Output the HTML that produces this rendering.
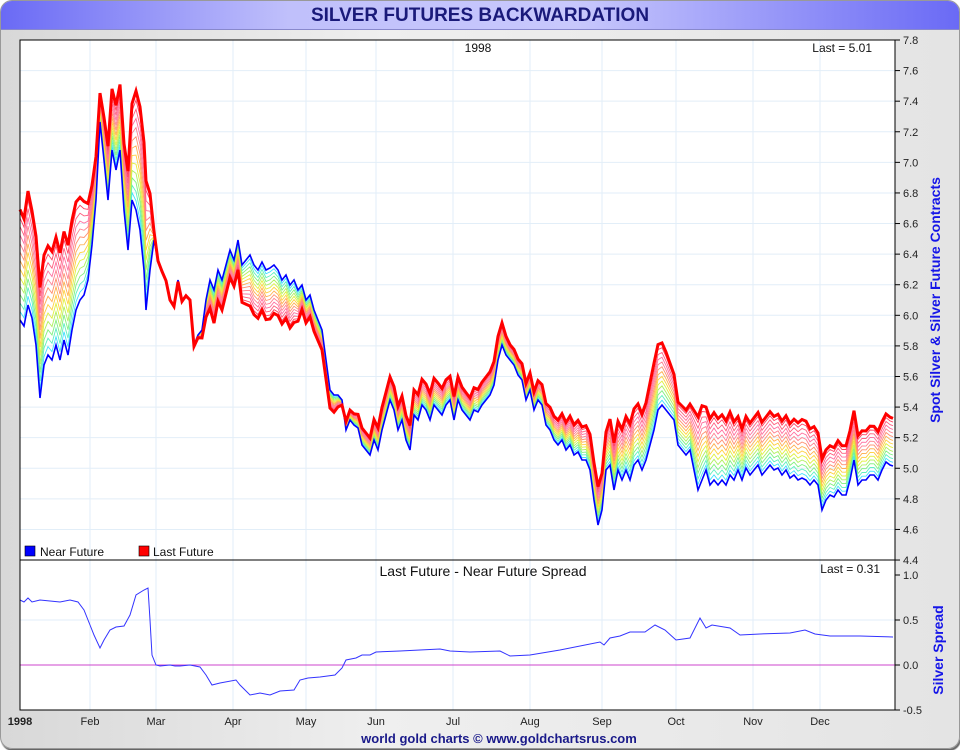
<!DOCTYPE html>
<html><head><meta charset="utf-8"><style>
html,body{margin:0;padding:0;background:#fff;}
body{width:960px;height:750px;overflow:hidden;font-family:"Liberation Sans",sans-serif;}
#frame{position:absolute;left:0;top:0;width:958px;height:747px;border-radius:12px;background:linear-gradient(90deg,#d8d8d8,#efefef 40%,#e4e4e4);border:1px solid #999;box-shadow:1px 2px 1px #666;overflow:hidden;}
#title{position:absolute;left:0;top:0;width:958px;height:28px;background:linear-gradient(90deg,#6a6af5,#c0c0fb 30%,#c8c8fc 60%,#6a6af5);border-bottom:1px solid #8888cc;text-align:center;font-weight:bold;font-size:19px;line-height:30px;color:#1a1a7a;}
svg{position:absolute;left:0;top:0;}
</style></head><body>
<div id="frame"><div id="title">SILVER FUTURES BACKWARDATION</div></div>
<svg id="s" width="960" height="750" font-family="Liberation Sans, sans-serif"></svg>
<script>
const S=document.getElementById('s');let h='';
const L=20,R=895,T=40,MB=560,SB=710;
h+=`<rect x="${L}" y="${T}" width="${R-L}" height="${SB-T}" fill="#fff"/>`;
const mx=[20,90,156,233,306,376,453,530,602,676,753,820];
const mn=['1998','Feb','Mar','Apr','May','Jun','Jul','Aug','Sep','Oct','Nov','Dec'];
mx.forEach((x,i)=>{h+=`<line x1="${x}" y1="${T}" x2="${x}" y2="${SB}" stroke="#e2eef8"/>`;h+=`<text x="${x}" y="725" font-size="11" text-anchor="middle" fill="#222" ${i==0?'font-weight="bold"':''}>${mn[i]}</text>`;});
for(let i=0;i<=17;i++){let v=7.8-i*0.2,y=T+i*30.59;if(i>0&&i<17)h+=`<line x1="${L}" y1="${y}" x2="${R}" y2="${y}" stroke="#e2eef8"/>`;h+=`<line x1="${R}" y1="${y}" x2="${R+5}" y2="${y}" stroke="#000"/><text x="${R+8}" y="${y+4}" font-size="11" fill="#222">${v.toFixed(1)}</text>`;}
[[1,575],[0.5,620],[0,665],[-0.5,710]].forEach(([v,y])=>{if(y<710&&y>575)h+=`<line x1="${L}" y1="${y}" x2="${R}" y2="${y}" stroke="#e2eef8"/>`;h+=`<line x1="${R}" y1="${y}" x2="${R+5}" y2="${y}" stroke="#000"/><text x="${R+8}" y="${y+4}" font-size="11" fill="#222">${v.toFixed(1)}</text>`;});
const B=[20,320,24,326,28,305,32,318,36,345,40,398,44,365,48,355,52,360,56,345,60,360,64,340,68,355,72,330,76,310,80,300,84,295,88,280,92,245,96,200,100,122,104,160,108,200,112,150,116,170,120,150,124,210,128,250,132,200,136,210,140,230,144,270,146,310,150,270,154,240,158,260,162,270,166,280,170,300,174,305,178,280,182,300,186,295,190,300,194,345,198,335,202,330,206,300,210,280,214,290,218,270,222,280,226,265,230,250,234,260,238,240,242,265,246,260,250,255,254,265,258,270,262,262,266,270,270,268,274,265,278,270,282,280,286,275,290,285,294,280,298,290,302,285,306,300,310,295,314,310,318,320,322,330,326,360,330,390,334,395,338,395,342,400,346,430,350,420,354,425,358,428,362,445,366,450,370,455,374,440,378,450,382,430,386,415,390,400,394,410,398,430,402,420,406,440,410,450,414,415,418,420,422,405,426,410,430,420,434,405,438,410,442,415,446,405,450,400,454,420,458,400,462,410,466,415,470,420,474,410,478,412,482,405,486,400,490,395,494,385,498,360,502,345,506,355,510,360,514,365,518,375,522,380,526,400,530,390,534,410,538,400,542,405,546,425,550,430,554,440,558,445,562,440,566,450,570,445,574,455,578,452,582,460,586,460,590,470,594,500,598,525,602,510,606,470,610,465,614,490,618,470,622,480,626,470,630,480,634,465,638,460,642,470,646,460,650,445,654,430,658,410,662,405,666,410,670,415,674,420,678,445,682,450,686,455,690,450,694,470,698,490,702,480,706,470,710,485,714,480,718,485,722,480,726,485,730,475,734,480,738,470,742,480,746,468,750,475,754,470,758,465,762,475,766,470,770,465,774,470,778,468,782,475,786,470,790,478,794,475,798,480,802,478,806,480,810,485,814,480,818,485,822,510,826,500,830,495,834,497,838,490,842,495,846,495,850,480,854,460,858,485,862,480,866,480,870,475,874,475,878,480,882,470,886,462,890,465,893,466];
const SP=[20,600,24,602,28,598,32,602,40,600,50,601,60,602,70,600,78,602,84,610,90,625,94,635,100,648,104,640,110,630,116,627,124,626,130,615,136,595,144,590,148,588,150,620,152,655,156,665,160,666,170,665,175,666,180,666,190,665,200,667,206,675,212,685,220,683,236,680,240,685,250,695,260,693,270,695,280,691,294,690,300,680,308,678,320,677,335,675,342,668,346,660,356,658,362,655,370,655,376,652,400,651,420,650,440,649,450,651,470,652,500,651,510,656,530,655,560,650,600,642,604,645,610,638,620,636,630,632,645,632,655,625,665,630,676,640,690,638,700,618,706,628,712,625,730,628,740,635,760,634,790,633,805,630,815,634,830,636,860,636,893,637];
function sp(x){for(let i=0;i<SP.length-2;i+=2){if(x>=SP[i]&&x<=SP[i+2]){let t=(x-SP[i])/(SP[i+2]-SP[i]||1);return SP[i+1]+t*(SP[i+3]-SP[i+1]);}}return 637;}
const cols=['#0000ff','#40e0ff','#60f0c0','#80f080','#b0f060','#e0f040','#ffd040','#ffb050','#ff9070','#ff8090','#ff70a0','#ff6080','#ff4060','#ff0000'];
const n=cols.length-1;
function line(k){let p=[];for(let i=0;i<B.length;i+=2){let x=B[i],y=B[i+1];let s=(665-sp(x))/90*153;p.push(x+','+(y-s*k/n).toFixed(1));}
return p.join(' ');}
for(let k=1;k<n;k++)h+=`<polyline points="${line(k)}" fill="none" stroke="${cols[k]}" stroke-width="0.9"/>`;
h+=`<polyline points="${line(0)}" fill="none" stroke="#0000ff" stroke-width="1.6"/>`;
h+=`<polyline points="${line(n)}" fill="none" stroke="#ff0000" stroke-width="3"/>`;
h+=`<line x1="${L}" y1="665" x2="${R}" y2="665" stroke="#cc44cc" stroke-width="1"/>`;
let sp2=[];for(let i=0;i<SP.length;i+=2)sp2.push(SP[i]+','+SP[i+1]);
h+=`<polyline points="${sp2.join(' ')}" fill="none" stroke="#3333ff" stroke-width="1"/>`;
h+=`<rect x="${L}" y="${T}" width="${R-L}" height="${SB-T}" fill="none" stroke="#000"/><line x1="${L}" y1="${MB}" x2="${R}" y2="${MB}" stroke="#000"/>`;
h+=`<text x="478" y="52" font-size="12" text-anchor="middle" fill="#111">1998</text><text x="872" y="52" font-size="12" text-anchor="end" fill="#111">Last = 5.01</text>`;
h+=`<rect x="25" y="546" width="10" height="10" fill="#0000ff" stroke="#000" stroke-width="0.6"/><text x="40" y="556" font-size="12" fill="#111">Near Future</text>`;
h+=`<rect x="139" y="546" width="10" height="10" fill="#ff0000" stroke="#000" stroke-width="0.6"/><text x="153" y="556" font-size="12" fill="#111">Last Future</text>`;
h+=`<text x="483" y="576" font-size="14" text-anchor="middle" fill="#111">Last Future - Near Future Spread</text><text x="880" y="573" font-size="12" text-anchor="end" fill="#111">Last = 0.31</text>`;
h+=`<text transform="translate(940,300) rotate(-90)" font-size="14" font-weight="bold" fill="#1515e8" text-anchor="middle">Spot Silver &amp; Silver Future Contracts</text>`;
h+=`<text transform="translate(943,650) rotate(-90)" font-size="14" font-weight="bold" fill="#1515e8" text-anchor="middle">Silver Spread</text>`;
h+=`<text x="499" y="743" font-size="13" font-weight="bold" text-anchor="middle" fill="#1a1a8a">world gold charts © www.goldchartsrus.com</text>`;
S.innerHTML=h;
</script>
</body></html>
